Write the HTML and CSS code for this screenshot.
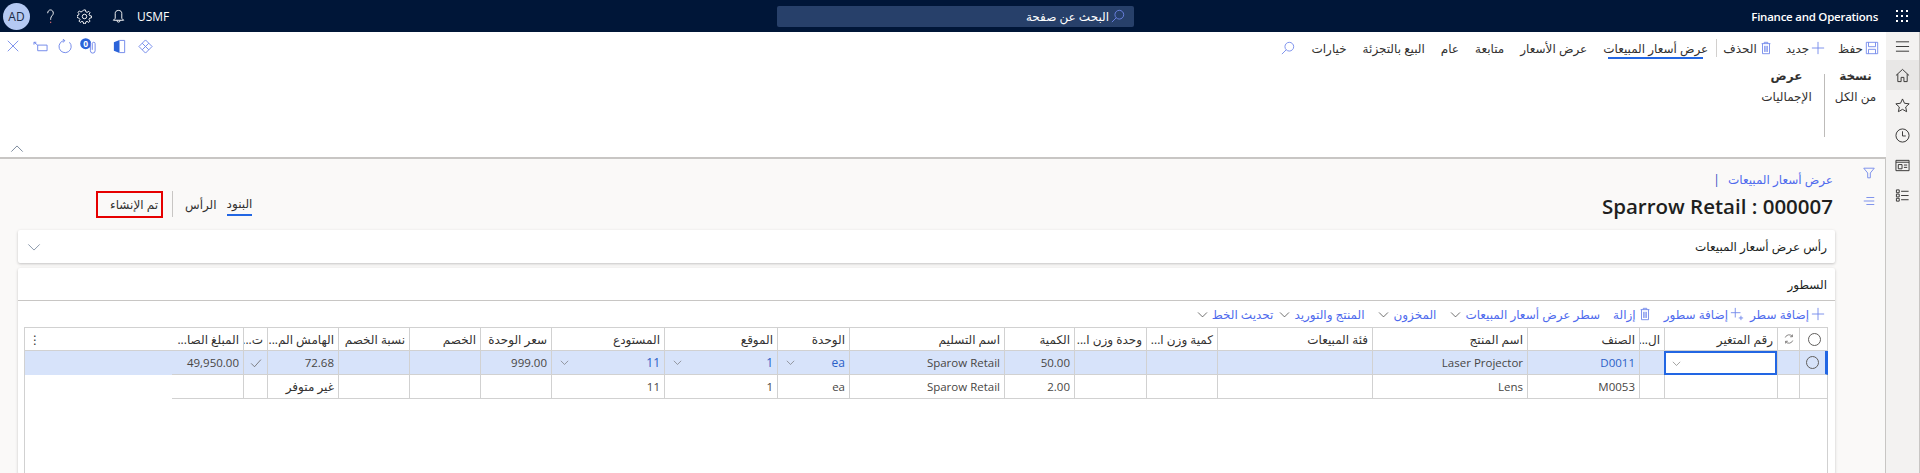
FILE: index.html
```html
<!DOCTYPE html>
<html lang="ar" dir="rtl">
<head>
<meta charset="utf-8">
<title>عرض أسعار المبيعات</title>
<link rel="stylesheet" href="styles.css">
</head>
<body>
<svg class="defs" width="0" height="0" aria-hidden="true">
  <defs>
    <symbol id="i-plus" viewBox="0 0 16 16"><path d="M8 1v14M1 8h14"/></symbol>
    <symbol id="i-plus2" viewBox="0 0 16 16"><path d="M6 1v11M1 6.500h11M12.500 10v5M10 12.500h5"/></symbol>
    <symbol id="i-trash" viewBox="0 0 16 16"><path d="M3 3h10M6 3V1.500h4V3M4 3v11.500h8V3M6.500 5.500v7M8 5.500v7M9.500 5.500v7"/></symbol>
    <symbol id="i-save" viewBox="0 0 16 16"><path d="M1.500 1.500h13v13h-13zM4 1.500v5h8v-5M4 14.500v-5h8v5"/></symbol>
    <symbol id="i-search" viewBox="0 0 16 16"><circle cx="9.500" cy="6.500" r="5"/><path d="M6 10l-5 5"/></symbol>
    <symbol id="i-chev" viewBox="0 0 16 16"><path d="M1.500 5l6.500 6.500L14.500 5"/></symbol>
  </defs>
</svg>

<header class="topbar">
  <svg class="waffle" viewBox="0 0 14 14"><g><rect x="1" y="1" width="2" height="2"/><rect x="6" y="1" width="2" height="2"/><rect x="11" y="1" width="2" height="2"/><rect x="1" y="6" width="2" height="2"/><rect x="6" y="6" width="2" height="2"/><rect x="11" y="6" width="2" height="2"/><rect x="1" y="11" width="2" height="2"/><rect x="6" y="11" width="2" height="2"/><rect x="11" y="11" width="2" height="2"/></g></svg>
  <span class="brand" dir="ltr">Finance and Operations</span>
  <div class="searchbox">
    <svg class="ico ico-search-top"><use href="#i-search"/></svg>
    <span>البحث عن صفحة</span>
  </div>
  <div class="tools">
    <span class="company" dir="ltr">USMF</span>
    <svg class="tool" viewBox="0 0 16 16"><path d="M8 1.500c-2.200 0-3.500 1.300-3.500 3.200v5.200l-2 2.100h11l-2-2.100V4.700C11.500 2.800 10.200 1.500 8 1.500zM6.500 12v.5a1.500 1.500 0 003 0V12"/></svg>
    <svg class="tool" viewBox="0 0 16 16"><circle cx="8" cy="8" r="2.400"/><path d="M7 1h2l.4 2 1.400.6 1.700-1.100 1.400 1.400-1.100 1.700.6 1.400 2 .4v2l-2 .4-.6 1.400 1.100 1.700-1.400 1.400-1.700-1.100-1.400.6-.4 2H7l-.4-2-1.400-.6-1.700 1.100-1.400-1.400 1.100-1.700L1.600 9.400 0 9V7l1.600-.4.600-1.400-1.100-1.700 1.400-1.400 1.700 1.100 1.400-.6z"/></svg>
    <svg class="tool tool-help" viewBox="0 0 16 16"><path d="M5 4.500C5 2.500 6.300 1 8 1s3 1.500 3 3.500c0 2-2.500 3-2.800 5.500v1.500"/><path class="reddot" d="M8.200 13.500v1.500"/></svg>
    <span class="avatar" dir="ltr">AD</span>
  </div>
</header>

<div class="shell">
  <div class="main">
    <section class="ribbon">
      <div class="commands">
        <button class="cmd"><svg class="ico"><use href="#i-save"/></svg>حفظ</button>
        <button class="cmd"><svg class="ico"><use href="#i-plus"/></svg>جديد</button>
        <button class="cmd cmd-last"><svg class="ico"><use href="#i-trash"/></svg>الحذف</button>
        <span class="cmd-sep"></span>
        <button class="tab active">عرض أسعار المبيعات</button>
        <button class="tab">عرض الأسعار</button>
        <button class="tab">متابعة</button>
        <button class="tab">عام</button>
        <button class="tab">البيع بالتجزئة</button>
        <button class="tab">خيارات</button>
        <svg class="ico ico-find"><use href="#i-search"/></svg>
        <div class="actions">
          <svg class="act" viewBox="0 0 16 16"><path d="M2 2l12 12M14 2L2 14"/></svg>
          <svg class="act act-rect" viewBox="0 0 16 16"><path d="M1 3.500L5 6.500h10v6H5V6.500"/><path d="M1 6V3.500h2.500"/></svg>
          <svg class="act act-refresh" viewBox="0 0 16 16"><path d="M12.200 3.500A6.500 6.500 0 1 1 7 1.600M5 0l2.200 1.600L5.500 3.800"/></svg>
          <svg class="act act-badge" viewBox="0 0 18 18"><circle class="fill" cx="6" cy="6" r="5.800"/><text x="6" y="9.500" class="badge-num" text-anchor="middle">0</text><path d="M11 5v8.500a2.500 2.500 0 005 0V6a1.500 1.500 0 00-3 0v6.500"/></svg>
          <svg class="act act-office" viewBox="0 0 16 16"><path class="fill" d="M2 3.500L8 1v14l-6-2.500z"/><path d="M8 1.500h5.500v13H8"/></svg>
          <svg class="act act-diamond" viewBox="0 0 16 16"><path d="M8 1l7 7-7 7-7-7zM4.500 4.500l7 7M11.500 4.500l-7 7"/></svg>
        </div>
      </div>
      <div class="groups">
        <div class="group">
          <h3>نسخة</h3>
          <span>من الكل</span>
        </div>
        <div class="group group-view">
          <h3>عرض</h3>
          <span>الإجماليات</span>
        </div>
      </div>
      <svg class="collapse" viewBox="0 0 16 16"><path d="M1.500 11L8 4.500 14.500 11"/></svg>
    </section>

    <div class="workspace">
      <div class="content">
        <div class="crumbs"><a class="crumb">عرض أسعار المبيعات</a><span class="crumb-bar">|</span></div>
        <div class="titlerow">
          <h1 dir="ltr">Sparrow Retail : 000007</h1>
          <nav class="views">
            <a class="view active">البنود</a>
            <a class="view">الرأس</a>
            <span class="view-sep"></span>
            <span class="status">تم الإنشاء</span>
          </nav>
        </div>

        <div class="card card-head">
          <h2>رأس عرض أسعار المبيعات</h2>
          <svg class="head-chev" viewBox="0 0 16 16"><path d="M1.500 5l6.500 6.500L14.500 5"/></svg>
        </div>

        <div class="card card-lines">
          <h2 class="lines-title">السطور</h2>
          <div class="toolbar">
            <button class="tb tb-a"><svg class="ico"><use href="#i-plus"/></svg>إضافة سطر</button>
            <button class="tb tb-b"><svg class="ico"><use href="#i-plus2"/></svg>إضافة سطور</button>
            <button class="tb tb-c"><svg class="ico"><use href="#i-trash"/></svg>إزالة</button>
            <button class="tb tb-d">سطر عرض أسعار المبيعات<svg class="ico chev"><use href="#i-chev"/></svg></button>
            <button class="tb tb-d">المخزون<svg class="ico chev"><use href="#i-chev"/></svg></button>
            <button class="tb tb-d">المنتج والتوريد<svg class="ico chev"><use href="#i-chev"/></svg></button>
            <button class="tb tb-d tb-e">تحديث الخط<svg class="ico chev"><use href="#i-chev"/></svg></button>
          </div>

          <div class="grid">
            <div class="row head">
              <div class="c c-mid"><span class="radio"></span></div>
              <div class="c c-mid"><svg class="refresh" viewBox="0 0 16 16"><path d="M3 6a5.500 5.500 0 0 1 9.500-1.500M13 10a5.500 5.500 0 0 1-9.500 1.500M12.500 2v3h-3M3.500 14v-3h3"/></svg></div>
              <div class="c">رقم المتغير</div>
              <div class="c">ال...</div>
              <div class="c">الصنف</div>
              <div class="c">اسم المنتج</div>
              <div class="c">فئة المبيعات</div>
              <div class="c">كمية وزن ا...</div>
              <div class="c">وحدة وزن ا...</div>
              <div class="c">الكمية</div>
              <div class="c">اسم التسليم</div>
              <div class="c">الوحدة</div>
              <div class="c">الموقع</div>
              <div class="c">المستودع</div>
              <div class="c">سعر الوحدة</div>
              <div class="c">الخصم</div>
              <div class="c">نسبة الخصم</div>
              <div class="c">الهامش الم...</div>
              <div class="c">ت...</div>
              <div class="c">المبلغ الصا...</div>
              <div class="c c-fill"><span class="kebab">⋮</span></div>
            </div>
            <div class="row sel">
              <div class="c c-mid c-mark"><span class="radio"></span></div>
              <div class="c"></div>
              <div class="c c-focus"><svg class="mini" viewBox="0 0 16 16"><path d="M1.500 5l6.500 6.500L14.500 5"/></svg></div>
              <div class="c"></div>
              <div class="c link" dir="ltr">D0011</div>
              <div class="c" dir="ltr">Laser Projector</div>
              <div class="c"></div>
              <div class="c"></div>
              <div class="c"></div>
              <div class="c" dir="ltr">50.00</div>
              <div class="c" dir="ltr">Sparow Retail</div>
              <div class="c c-dd link"><span>ea</span><svg class="mini" viewBox="0 0 16 16"><path d="M1.500 5l6.500 6.500L14.500 5"/></svg></div>
              <div class="c c-dd link"><span>1</span><svg class="mini" viewBox="0 0 16 16"><path d="M1.500 5l6.500 6.500L14.500 5"/></svg></div>
              <div class="c c-dd link"><span>11</span><svg class="mini" viewBox="0 0 16 16"><path d="M1.500 5l6.500 6.500L14.500 5"/></svg></div>
              <div class="c" dir="ltr">999.00</div>
              <div class="c"></div>
              <div class="c"></div>
              <div class="c" dir="ltr">72.68</div>
              <div class="c c-mid"><svg class="mini mini-check" viewBox="0 0 16 16"><path d="M1.500 8.500l4.500 4.500L14.500 3.500"/></svg></div>
              <div class="c" dir="ltr">49,950.00</div>
              <div class="c c-fill"></div>
            </div>
            <div class="row">
              <div class="c"></div>
              <div class="c"></div>
              <div class="c"></div>
              <div class="c"></div>
              <div class="c" dir="ltr">M0053</div>
              <div class="c" dir="ltr">Lens</div>
              <div class="c"></div>
              <div class="c"></div>
              <div class="c"></div>
              <div class="c" dir="ltr">2.00</div>
              <div class="c" dir="ltr">Sparow Retail</div>
              <div class="c" dir="ltr">ea</div>
              <div class="c" dir="ltr">1</div>
              <div class="c" dir="ltr">11</div>
              <div class="c"></div>
              <div class="c"></div>
              <div class="c"></div>
              <div class="c">غير متوفر</div>
              <div class="c"></div>
              <div class="c"></div>
              <div class="c c-blank"></div>
            </div>
          </div>
        </div>
      </div>
      <aside class="filterpane">
        <svg class="fp" viewBox="0 0 16 16"><path d="M2 2.500h12L9.500 8v5.500h-3V8z"/></svg>
        <svg class="fp" viewBox="0 0 16 16"><path d="M5 4h9M2 8h12M5 12h9"/></svg>
      </aside>
    </div>
  </div>

  <nav class="rail">
    <div class="rail-item"><svg viewBox="0 0 16 16"><path d="M1 3h14M1 8h14M1 13h14"/></svg></div>
    <div class="rail-item is-home"><svg viewBox="0 0 16 16"><path d="M1 8l7-6.500L15 8M3 6.500V14.500h3.500V10h3v4.500H13V6.500"/></svg></div>
    <div class="rail-item"><svg viewBox="0 0 16 16"><path d="M8 1l2.100 4.600 5 .6-3.700 3.400 1 5L8 12.100l-4.400 2.500 1-5L.9 6.200l5-.6z"/></svg></div>
    <div class="rail-item"><svg viewBox="0 0 16 16"><circle cx="8" cy="8" r="7"/><path d="M8 3.500V8.500H11.500"/></svg></div>
    <div class="rail-item"><svg viewBox="0 0 16 16"><path d="M1 2.500h14v11H1zM1 4.500h14M3.500 7h4v4.500h-4zM9.500 7.500h3.500M9.500 10h3.500"/></svg></div>
    <div class="rail-item"><svg viewBox="0 0 16 16"><path d="M1.500 2h3v3h-3zM1.500 6.500h3v3h-3zM1.500 11h3v3h-3zM6.500 3.500h8M6.500 8h8M6.500 12.500h8"/></svg></div>
  </nav>
</div>
</body>
</html>
```

FILE: styles.css
```css
* { box-sizing: border-box; }

html, body {
  margin: 0;
  height: 473px;
  overflow: hidden;
}

body {
  font-family: "Open Sans", "DejaVu Sans", sans-serif;
  font-size: 12px;
  color: #323130;
  background: #fff;
}

.defs { position: absolute; }

button {
  font: inherit;
  color: inherit;
  background: none;
  border: 0;
  padding: 0;
  display: inline-flex;
  align-items: center;
}

/* Top bar */
.topbar {
  height: 32px;
  background: #001638;
  color: #fff;
  display: flex;
  align-items: center;
  padding: 0 11px 0 3px;
}

.waffle { width: 14px; height: 14px; fill: #fff; margin-left: 17px; flex: none; }

.brand {
  font-weight: 600;
  font-size: 11.5px;
  letter-spacing: -0.25px;
  width: 128px;
  white-space: nowrap;
  text-align: right;
}

.searchbox {
  width: 357px;
  height: 21px;
  margin-right: 616px;
  background: #27406a;
  border-radius: 2px;
  display: flex;
  align-items: center;
  padding-right: 9px;
  gap: 2px;
  color: #fff;
  font-size: 12px;
}

.ico-search-top { width: 15px; height: 15px; stroke: #fff; }

.tools {
  display: flex;
  align-items: center;
  margin-right: auto;
}

.company { font-size: 12px; width: 32px; margin-left: 11px; }

.tool {
  width: 15px;
  height: 15px;
  margin-left: 19px;
  fill: none;
  stroke: #fff;
  stroke-width: 1;
}

.tool-help { margin-left: 13px; }

.reddot { stroke: #ff7b7b; }

.avatar {
  width: 27px;
  height: 27px;
  border-radius: 50%;
  background: #b4c9f3;
  color: #1b2a44;
  font-size: 12px;
  display: flex;
  align-items: center;
  justify-content: center;
}

/* Shell */
.shell {
  display: flex;
  height: 441px;
}

.rail {
  order: -1;
  width: 34px;
  flex: none;
  background: #f3f2f1;
  border-right: 1px solid #c8c6c4;
  display: flex;
  flex-direction: column;
}

.rail-item {
  height: 30px;
  display: flex;
  align-items: center;
  justify-content: center;
  flex: none;
}

.rail-item:first-child { height: 28px; }

.is-home { background: #e8e7e6; }

.rail-item svg {
  width: 15px;
  height: 15px;
  fill: none;
  stroke: #323130;
  stroke-width: 1;
}

.main {
  flex: 1;
  min-width: 0;
  display: flex;
  flex-direction: column;
}

/* Ribbon */
.ribbon {
  height: 127px;
  flex: none;
  background: #fff;
  border-bottom: 2px solid #c8c6c4;
  position: relative;
}

.commands {
  height: 32px;
  display: flex;
  align-items: center;
  padding-right: 7px;
}

.ico {
  width: 14px;
  height: 14px;
  flex: none;
  fill: none;
  stroke: #6f86ea;
  stroke-width: 1;
}

.cmd {
  gap: 2px;
  margin-left: 13px;
  height: 32px;
}

.cmd-last { margin-left: 6px; }

.cmd-sep {
  width: 1px;
  height: 18px;
  background: #d2d0ce;
}

.tab {
  height: 32px;
  margin: 0 8px;
  position: relative;
  white-space: nowrap;
}

.tab.active::after {
  content: "";
  position: absolute;
  right: 5px;
  left: 5px;
  bottom: 5px;
  height: 2px;
  background: #2266e3;
}

.ico-find { margin-right: 8px; }

.actions {
  margin-right: auto;
  display: flex;
  flex-direction: row-reverse;
  align-items: center;
  padding-left: 6px;
  margin-bottom: 4px;
}

.act {
  width: 14px;
  height: 14px;
  fill: none;
  stroke: #6f86ea;
  stroke-width: 1;
}

.act-rect { width: 15px; height: 15px; margin-left: 13px; }
.act-refresh { width: 15px; height: 15px; margin-left: 10px; }
.act-badge { width: 17px; height: 17px; margin-left: 7px; }
.act-office { width: 15px; height: 15px; margin-left: 15px; }
.act-diamond { width: 15px; height: 15px; margin-left: 11px; }

.fill { fill: #2b63d9; stroke: none; }

.badge-num { font-size: 9px; font-weight: 700; fill: #fff; stroke: none; }

.groups {
  display: flex;
  padding: 10px 0 0;
}

.group {
  width: 62px;
  height: 63px;
  display: flex;
  flex-direction: column;
  align-items: center;
  gap: 5px;
  border-left: 1px solid #bdbbb9;
}

.group h3, .card h2 { margin: 0; font-size: 12px; }

.group h3 { font-weight: 700; line-height: 14px; margin-top: -5px; }

.group-view { width: 75px; border-left: 0; }

.collapse {
  position: absolute;
  left: 10px;
  bottom: 1px;
  width: 14px;
  height: 14px;
  fill: none;
  stroke: #6b7a90;
}

/* Workspace */
.workspace {
  flex: 1;
  display: flex;
  min-height: 0;
  background: #faf9f8;
}

.filterpane {
  order: -1;
  width: 33px;
  flex: none;
  border-right: 1px solid #c8c6c4;
  display: flex;
  flex-direction: column;
  align-items: center;
  padding-top: 7px;
  gap: 14px;
}

.fp {
  width: 14px;
  height: 14px;
  fill: none;
  stroke: #6f86ea;
}

.content {
  flex: 1;
  min-width: 0;
  padding: 0 18px 0 18px;
}

.crumbs {
  display: flex;
  align-items: center;
  height: 20px;
  margin-top: 10px;
  padding-right: 2px;
  color: #4f6bed;
  font-size: 12px;
}

.crumb-bar { margin-right: 8px; color: #2b4bc4; }

.titlerow {
  display: flex;
  align-items: center;
  height: 33px;
  margin-right: 2px;
}

h1 {
  margin: 0;
  font-size: 20.500px;
  font-weight: 600;
  color: #201f1e;
}

.views {
  margin-right: auto;
  display: flex;
  align-items: center;
  padding-left: 78px;
  margin-top: -3px;
}

.view { padding: 2px 0; margin-left: 12px; }

.view.active {
  margin-left: 10px;
  border-bottom: 2px solid #2266e3;
  color: #323130;
}

.view-sep {
  width: 1px;
  height: 26px;
  background: #c8c6c4;
  margin-left: 9px;
}

.status {
  width: 67px;
  height: 27px;
  border: 2px solid #e60000;
  display: flex;
  align-items: center;
  padding-right: 3px;
  white-space: nowrap;
}

.card {
  background: #fff;
  border-radius: 2px;
  box-shadow: 0 1px 3px rgba(0, 0, 0, 0.22);
}

.card-head {
  height: 33px;
  margin-top: 8px;
  display: flex;
  align-items: center;
  padding: 0 8px 0 9px;
  justify-content: space-between;
}

.card h2 { font-weight: 400; color: #201f1e; }

.head-chev {
  width: 14px;
  height: 14px;
  fill: none;
  stroke: #7c8ca0;
}

.card-lines {
  margin-top: 5px;
  height: 206px;
  overflow: hidden;
}

.lines-title {
  height: 33px;
  display: flex;
  align-items: center;
  padding-right: 8px;
  border-bottom: 1px solid #c8c6c4;
}

.toolbar {
  height: 26px;
  display: flex;
  align-items: center;
  padding-right: 10px;
  color: #4f6bed;
  white-space: nowrap;
}

.tb { gap: 2px; }

.tb-b { margin-right: 6px; }
.tb-c { margin-right: 12px; }
.tb-d { margin-right: 14px; gap: 4px; }
.tb-c + .tb-d { margin-right: 13px; }
.tb-e { margin-right: 6px; }

.chev { stroke: #323130; width: 11px; height: 11px; }

/* Grid */
.grid {
  margin: 0 7px 0 6px;
  height: 147px;
  border: solid #d1d1d1;
  border-width: 1px 0 0 1px;
  box-shadow: inset -1px 0 0 #d1d1d1;
}

.row {
  display: grid;
  grid-template-columns: 29px 22px 113px 25px 112px 155px 155px 71px 72px 70px 155px 72px 113px 113px 71px 71px 71px 71px 24px 71px minmax(0, 1fr);
  height: 24px;
}

.row.head { height: 23px; color: #323130; }

.c {
  border-left: 1px solid #d1d1d1;
  border-bottom: 1px solid #d1d1d1;
  padding: 0 4px;
  display: flex;
  align-items: center;
  justify-content: flex-start;
  white-space: nowrap;
  overflow: hidden;
  min-width: 0;
}

.c:nth-child(20) { border-left: 0; }

.c[dir="ltr"] { justify-content: flex-end; font-size: 11.5px; color: #484644; }

.c.link[dir="ltr"] { color: #2b5fc7; }

.c-mid { justify-content: center; padding: 0; }

.c-fill, .c-blank { border-left: 0; }

.sel .c-fill, .row:not(.head):not(.sel) .c-blank { border-bottom: 0; }

.kebab { margin-right: auto; font-size: 12px; }

.sel { background: #d7e3fa; }

.c-mark { border-right: 3px solid #2266e3; }

.radio {
  width: 13px;
  height: 13px;
  border: 1px solid #605e5c;
  border-radius: 50%;
  display: block;
}

.refresh {
  width: 12px;
  height: 12px;
  fill: none;
  stroke: #605e5c;
}

.link { color: #2b5fc7; }

.c-focus {
  background: #fff;
  box-shadow: inset 0 0 0 1px #2266e3;
  border: 1px solid #2266e3;
  justify-content: flex-end;
  padding-left: 7px;
}

.c-dd {
  justify-content: space-between;
  padding-left: 8px;
}

.mini {
  width: 9px;
  height: 9px;
  fill: none;
  stroke: #605e5c;
  flex: none;
}

.mini-check { width: 12px; height: 12px; }
```
